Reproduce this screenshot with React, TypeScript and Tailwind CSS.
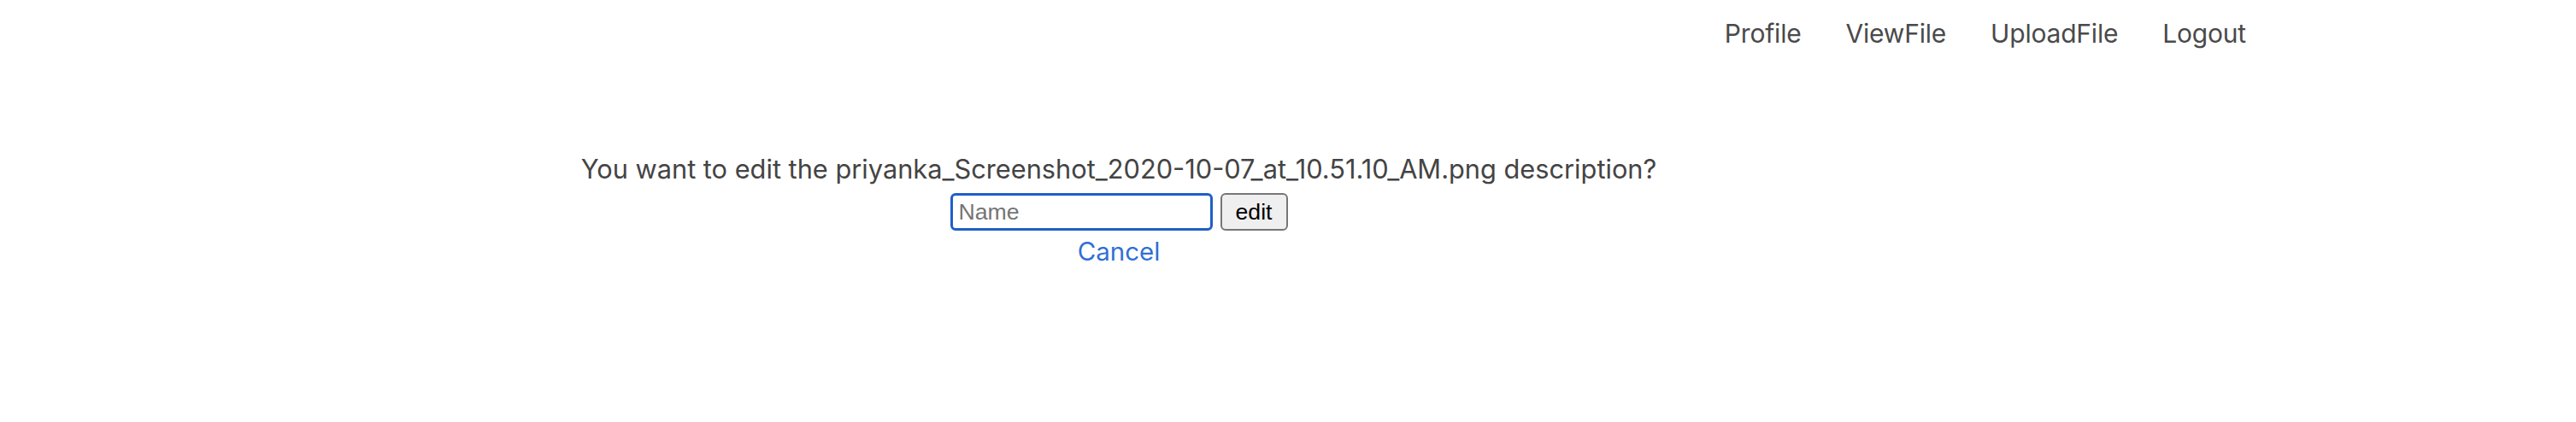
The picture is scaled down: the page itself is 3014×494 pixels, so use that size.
export default function App() {
  const links = ["Profile", "ViewFile", "UploadFile", "Logout"];
  return (
    <div className="min-h-[494px] w-full bg-white font-['Inter',sans-serif]">
      <div className="mx-auto w-[2280px]">
        {/* top nav */}
        <nav className="flex justify-end gap-[52px] pr-[19px] pt-[16px]">
          {links.map((l) => (
            <a key={l} href="#" className="text-[30px] leading-[46px] tracking-[-0.2px] text-[#4a4a4a]">
              {l}
            </a>
          ))}
        </nav>

        <div className="mt-[113px] flex w-[1884px] flex-col items-center text-center">
          <p className="text-[30.75px] leading-[46px] text-[#444444]">
            You want to edit the priyanka_Screenshot_2020-10-07_at_10.51.10_AM.png description?
          </p>
          <form className="mt-[5px] flex items-center gap-[9px] font-['Liberation_Sans',Arial,sans-serif]">
            <input
              type="text"
              placeholder="Name"
              className="h-[44px] w-[307px] rounded-[6px] border-[3px] border-[#1f5fc7] px-[7px] text-[26.67px] text-black outline-none placeholder:text-[#757575]"
            />
            <button
              type="button"
              className="h-[44px] w-[79px] rounded-[6px] border-2 border-[#767676] bg-[#efefef] text-[26.67px] text-black"
            >
              edit
            </button>
          </form>
          <a href="#" className="mt-[2px] text-[29.5px] leading-[45px] text-[#2f6fd6]">
            Cancel
          </a>
        </div>
      </div>
    </div>
  );
}
